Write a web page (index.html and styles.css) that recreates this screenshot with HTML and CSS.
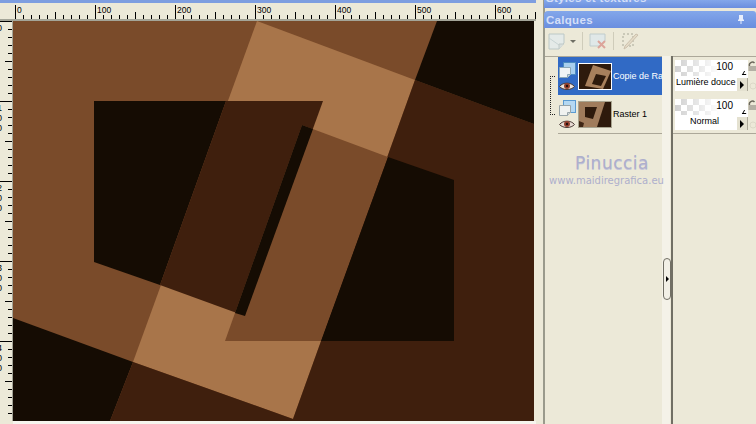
FILE: index.html
```html
<!DOCTYPE html>
<html lang="fr">
<head>
<meta charset="utf-8">
<title>Calques</title>
<link rel="stylesheet" href="styles.css">
</head>
<body>
<div class="app">
  <main class="workspace">
    <div class="titlestrip"></div>
    <div class="hruler">
      <div class="hcell"><span>0</span></div>
      <div class="hcell"><span>100</span></div>
      <div class="hcell"><span>200</span></div>
      <div class="hcell"><span>300</span></div>
      <div class="hcell"><span>400</span></div>
      <div class="hcell"><span>500</span></div>
      <div class="hcell"><span>600</span></div>
    </div>
    <div class="canvasrow">
      <div class="vruler">
        <div class="vcell"><span>0</span></div>
        <div class="vcell"><span>1</span><span>0</span><span>0</span></div>
        <div class="vcell"><span>2</span><span>0</span><span>0</span></div>
        <div class="vcell"><span>3</span><span>0</span><span>0</span></div>
        <div class="vcell"><span>4</span><span>0</span><span>0</span></div>
      </div>
      <svg class="canvas" viewBox="13 21 521 400" width="521" height="400" aria-label="Image">
        <rect x="13" y="21" width="521" height="400" fill="#7a4b2a"/>
        <polygon points="13,318 133,362 110,421 13,421" fill="#150c03"/>
        <polygon points="257,21 415,80 293,419 133,362" fill="#a8754a"/>
        <polygon points="415,80 534,124 534,421 293,421 293,419" fill="#3f1f0d"/>
        <polygon points="133,362 293,419 293,421 110,421" fill="#3f1f0d"/>
        <polygon points="437,21 534,21 534,124 415,80" fill="#150c03"/>
        <polygon points="94,101 226,101 160,285 94,262" fill="#150c03"/>
        <polygon points="226,101 323,101 245,316 160,285" fill="#3f1f0d"/>
        <polygon points="302,125 388,157 321,341 225,341" fill="#7a4b2a"/>
        <polygon points="388,157 454,180 454,341 321,341" fill="#150c03"/>
        <polygon points="302,125 313,129 245,316 235,313" fill="#150c03"/>
      </svg>
    </div>
    <div class="bottomstrip"></div>
  </main>
  <aside class="dock">
    <div class="dockhead dockhead-clipped"><span>Styles et textures</span></div>
    <div class="dockhead dockhead-layers">
      <span>Calques</span>
      <svg class="pin" viewBox="0 0 8 9" width="8" height="9"><path d="M2 0h4v4l1 1v1H4.500v3h-1V6H1V5l1-1z" fill="#e8eefc"/></svg>
    </div>
    <div class="toolbar">
      <svg viewBox="0 0 18 17" width="18" height="17"><path d="M1 1h15v9l-5 6H1z" fill="#e4eae8" stroke="#bcc8c6"/><path d="M1 5l10 7" stroke="#c8d4d4" fill="none"/><path d="M11 16v-5h5" fill="#d8dedc" stroke="#c0cac8"/></svg>
      <span class="caret"></span>
      <span class="toolsep"></span>
      <svg viewBox="0 0 18 17" width="18" height="17"><path d="M1 1h15v7l-5 5H1z" fill="#e0e8e8" stroke="#c0cccc"/><path d="M9 8l7 7M16 8l-7 7" stroke="#dca49a" stroke-width="2"/></svg>
      <span class="toolsep"></span>
      <svg viewBox="0 0 20 18" width="20" height="18"><path d="M3 2h10v12H3z" fill="none" stroke="#a8a898" stroke-dasharray="2 2"/><path d="M18 3L7 15l-3 2 1-3L16 2z" fill="#e4dcc8" stroke="#ccc0ac"/></svg>
    </div>
    <div class="panels">
      <section class="layers">
        <div class="layerlist">
          <div class="linkmark"></div>
          <div class="layerrow selected">
            <div class="rowicons">
              <svg viewBox="0 0 17 17" width="17" height="17"><rect x="4.500" y="0.500" width="12" height="12" fill="#a8cfee" stroke="#4a8ac0"/><path d="M0.500 5.500h11v7l-3 3h-8z" fill="#f0f4f6" stroke="#8ca8b8"/><path d="M8.500 15.500v-3h3" fill="#c8d4dc" stroke="#8ca8b8"/></svg>
              <svg viewBox="0 0 16 10" width="16" height="10"><path d="M0.500 5.500C4 1 12 1 15.500 5.500 12 9.500 4 9.500 0.500 5.500z" fill="#eee4dc" stroke="#4c3c38"/><circle cx="8" cy="5" r="3" fill="#94402e"/><circle cx="8" cy="5" r="1.200" fill="#201010"/></svg>
            </div>
            <svg class="thumb thumb-on" viewBox="0 0 32 25" width="32" height="25">
              <rect width="32" height="25" fill="#2e1a0c"/>
              <polygon points="14,1 32,7 24,25 6,22" fill="#a8805c"/>
              <polygon points="17,10 27,12 22,22 13,20" fill="#2e1a0c"/>
            </svg>
            <span class="layername">Copie de Raster 1</span>
          </div>
          <div class="layerrow">
            <div class="rowicons">
              <svg viewBox="0 0 17 17" width="17" height="17"><rect x="4.500" y="0.500" width="12" height="12" fill="#b4d8f2" stroke="#5a9ad0"/><path d="M0.500 5.500h11v7l-3 3h-8z" fill="#f0f2f0" stroke="#98a4a8"/><path d="M8.500 15.500v-3h3" fill="#d0d6d8" stroke="#98a4a8"/></svg>
              <svg viewBox="0 0 16 10" width="16" height="10"><path d="M0.500 5.500C4 1 12 1 15.500 5.500 12 9.500 4 9.500 0.500 5.500z" fill="#e8dcd4" stroke="#4c3c38"/><circle cx="8" cy="5" r="3" fill="#94402e"/><circle cx="8" cy="5" r="1.200" fill="#201010"/></svg>
            </div>
            <svg class="thumb" viewBox="0 0 32 25" width="32" height="25">
              <rect width="32" height="25" fill="#a07c5c"/>
              <polygon points="26,0 32,0 32,25 18,25" fill="#2e1a0c"/>
              <polygon points="6,5 18,5 14,17 6,15" fill="#2e1a0c"/>
              <polygon points="0,19 5,21 4,25 0,25" fill="#3f2614"/>
            </svg>
            <span class="layername">Raster 1</span>
          </div>
        </div>
        <div class="watermark">
          <div class="wm-name">Pinuccia</div>
          <div class="wm-url">www.maidiregrafica.eu</div>
        </div>
      </section>
      <div class="splitter">
        <div class="grip"><span class="griparrow"></span></div>
      </div>
      <section class="props">
        <div class="proprow">
          <div class="opacity"><span>100</span><i class="resize"></i></div>
          <div class="blend"><span>Lumière douce</span><b class="blendbtn"><i></i></b></div>
          <svg class="lock" viewBox="0 0 8 32" width="8" height="32"><path d="M1.500 12V7a3 3 0 0 1 5 -3" fill="none" stroke="#6c685c" stroke-width="1.500"/><rect x="1" y="7" width="7" height="5" fill="#b4b0a4"/><circle cx="5" cy="27" r="3" fill="none" stroke="#dcd9c8"/></svg>
        </div>
        <div class="proprow">
          <div class="opacity"><span>100</span><i class="resize"></i></div>
          <div class="blend center"><span>Normal</span><b class="blendbtn"><i></i></b></div>
          <svg class="lock" viewBox="0 0 8 32" width="8" height="32"><path d="M1.500 12V7a3 3 0 0 1 5 -3" fill="none" stroke="#6c685c" stroke-width="1.500"/><rect x="1" y="7" width="7" height="5" fill="#b4b0a4"/><circle cx="5" cy="27" r="3" fill="none" stroke="#dcd9c8"/></svg>
        </div>
      </section>
    </div>
  </aside>
</div>
</body>
</html>
```

FILE: styles.css
```css
* { box-sizing: border-box; }
html, body { margin: 0; padding: 0; }
body {
  width: 756px;
  height: 424px;
  overflow: hidden;
  background: #ece9d8;
  font-family: "Liberation Sans", Arial, sans-serif;
  color: #000;
}
.app { display: flex; width: 756px; height: 424px; }

/* Workspace */
.workspace { width: 543px; flex: none; display: flex; flex-direction: column; }
.titlestrip { height: 3px; width: 536px; background: #7e9ee0; flex: none; }
.hruler {
  height: 18px;
  display: flex;
  padding: 2px 0 0 15px;
  overflow: hidden;
  border-bottom: 2px solid #a4a598;
  width: 536px;
  flex: none;
}
.hcell {
  width: 80px;
  flex: none;
  height: 14px;
  padding-left: 1px;
  font-size: 8.500px;
  line-height: 10px;
  border-left: 1px solid #000;
  background-image:
    linear-gradient(#000, #000),
    repeating-linear-gradient(90deg, transparent 0 7px, #000 7px 8px);
  background-size: 1px 7px, 100% 4px;
  background-position: 39px 100%, 0 100%;
  background-repeat: no-repeat;
}
.canvasrow { display: flex; height: 400px; flex: none; }
.vruler {
  width: 13px;
  height: 400px;
  flex: none;
  overflow: hidden;
  border-right: 1px solid #a4a598;
}
.vcell {
  height: 80px;
  display: flex;
  flex-direction: column;
  padding-top: 1px;
  font-size: 9px;
  line-height: 10px;
  border-top: 1px solid #000;
  background-image:
    linear-gradient(#000, #000),
    repeating-linear-gradient(180deg, transparent 0 7px, #000 7px 8px);
  background-size: 7px 1px, 4px 100%;
  background-position: 100% 39px, 8px 0;
  background-repeat: no-repeat;
}
.vcell span { margin-left: -3px; }
.canvas { display: block; flex: none; }
.bottomstrip { height: 3px; width: 523px; margin-left: 13px; background: #f6f5ee; flex: none; }

/* Dock */
.dock { width: 213px; flex: none; display: flex; flex-direction: column; border-left: 2px solid #9a9a8c; }
.dockhead {
  background: linear-gradient(180deg, #83a7ea, #6a8edf);
  color: #d4dff8;
  font-weight: bold;
  font-size: 11.500px;
  letter-spacing: 0.300px;
  flex: none;
  overflow: hidden;
}
.dockhead-clipped {
  height: 8px;
  line-height: 7px;
  margin-bottom: 3px;
  padding-left: 2px;
  margin-left: -1px;
  white-space: nowrap;
}
.dockhead-clipped span { position: relative; top: -5px; display: block; }
.dockhead-layers {
  height: 17px;
  line-height: 18px;
  margin-left: -1px;
  padding: 0 11px 0 2px;
  border-top-left-radius: 4px;
  border-top-right-radius: 3px;
  display: flex;
  justify-content: space-between;
  align-items: center;
}
.toolbar {
  height: 26px;
  flex: none;
  display: flex;
  align-items: center;
  padding: 0 0 0 3px;
  gap: 6px;
}
.caret {
  width: 0;
  height: 0;
  margin-left: -2px;
  border: 3px solid transparent;
  border-top: 3px solid #6e6e64;
  border-bottom-width: 0;
}
.toolsep { width: 1px; height: 18px; background: #cfccba; }
.panels { display: flex; flex: 1; min-height: 0; padding-top: 2px; }

.layers { width: 117px; flex: none; display: flex; flex-direction: column; }
.layerlist {
  position: relative;
  height: 78px;
  padding: 0 0 0 13px;
  border-top: 1px solid #aca899;
  width: 117px;
  flex: none;
}
.linkmark {
  position: absolute;
  left: 5px;
  top: 19px;
  width: 5px;
  height: 39px;
  border: 1px dotted #222;
  border-right: 0;
}
.layerrow {
  height: 38px;
  display: flex;
  align-items: center;
  gap: 3px;
  padding-left: 1px;
  overflow: hidden;
  white-space: nowrap;
  font-size: 9px;
}
.layerrow:last-child { height: 39px; border-bottom: 1px solid #aca899; }
.layerrow.selected { background: #316ac5; color: #fff; }
.rowicons { display: flex; flex-direction: column; gap: 2px; width: 17px; flex: none; }
.rowicons svg, .thumb { display: block; flex: none; }
.thumb { outline: 1px solid #a8a490; }
.thumb-on { outline: 1px solid #fff; }
.layername { margin-left: -1px; }

.watermark {
  position: relative;
  z-index: 1;
  text-align: center;
  margin-top: 19px;
  color: #aeafcc;
  width: 121px;
  margin-left: 1px;
}
.wm-name {
  font-family: "DejaVu Sans", sans-serif;
  font-size: 17px;
  line-height: 20px;
  letter-spacing: 0.500px;
  padding-left: 11px;
  text-shadow: 0 1px 0 #c4c6da;
}
.wm-url {
  font-family: "DejaVu Sans", sans-serif;
  font-size: 10px;
  line-height: 11px;
  margin-top: 2px;
  white-space: nowrap;
}

.splitter {
  width: 11px;
  flex: none;
  padding-top: 202px;
  background: linear-gradient(90deg, #f4f2e8 0 70%, #ece9d8 70% 80%, #716f64 80% 100%);
}
.grip {
  width: 8px;
  height: 42px;
  margin-left: 1px;
  border: 1px solid #716f64;
  border-radius: 4px;
  background: #f2f0e6;
  display: flex;
  align-items: center;
  padding-left: 2px;
}
.griparrow {
  width: 0;
  height: 0;
  border-left: 3px solid #000;
  border-top: 3px solid transparent;
  border-bottom: 3px solid transparent;
}

.props { flex: 1; min-width: 0; display: flex; flex-direction: column; border-top: 1px solid #aca899; height: 78px; }
.proprow {
  position: relative;
  height: 39px;
  padding: 3px 0 0 2px;
  font-size: 9px;
}
.proprow:last-child { height: 38px; border-bottom: 1px solid #aca899; }
.opacity {
  position: relative;
  width: 73px;
  height: 16px;
  background-color: #fff;
  background-image:
    linear-gradient(90deg, transparent, #fff 62%),
    conic-gradient(#d0d0d0 25%, #fff 0 50%, #d0d0d0 0 75%, #fff 0);
  background-size: 100% 100%, 12px 12px;
  text-align: right;
  padding-right: 15px;
  line-height: 14px;
  font-size: 10px;
}
.resize {
  position: absolute;
  right: 1px;
  bottom: 1px;
  width: 4px;
  height: 4px;
  border-left: 1px solid #000;
  border-bottom: 1px solid #000;
  transform: skewX(-30deg);
}
.blend {
  position: relative;
  width: 73px;
  height: 15px;
  background: #fff;
  line-height: 13px;
  white-space: nowrap;
  overflow: hidden;
  padding-left: 1px;
}
.blend.center { padding-left: 15px; }
.blendbtn {
  position: absolute;
  right: 0;
  top: 2px;
  width: 11px;
  height: 13px;
  background: #e4e1d0;
  border-right: 1px solid #aca899;
  display: flex;
  align-items: center;
  justify-content: center;
}
.blendbtn i {
  width: 0;
  height: 0;
  border-left: 4px solid #000;
  border-top: 4px solid transparent;
  border-bottom: 4px solid transparent;
}
.lock { position: absolute; left: 75px; top: 2px; }
```
